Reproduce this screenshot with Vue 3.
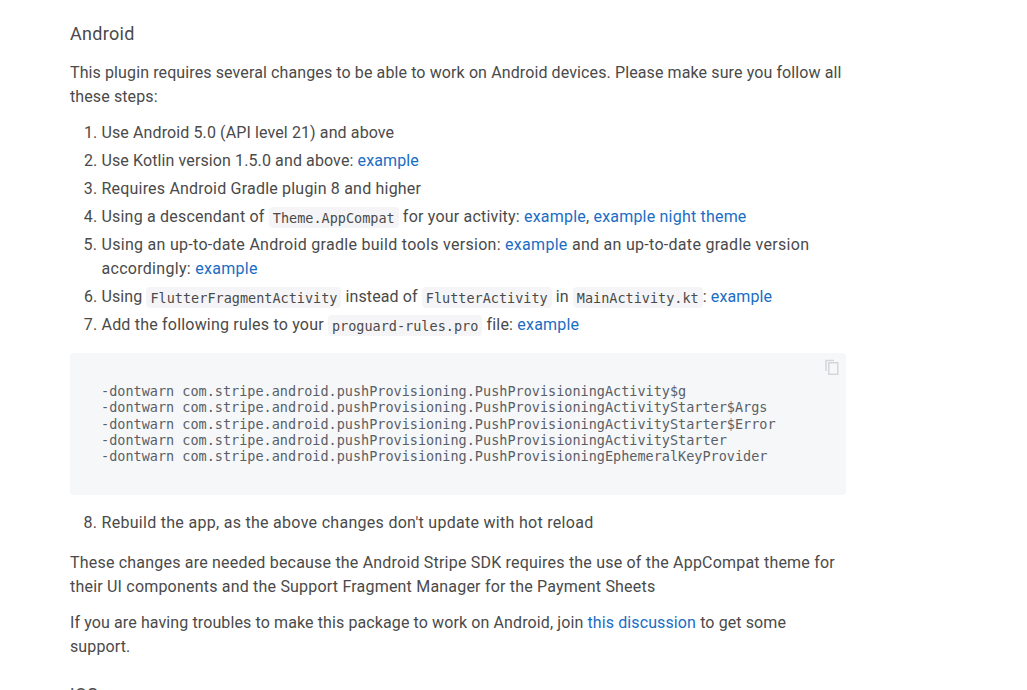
<script setup>
const lines = [
  '-dontwarn com.stripe.android.pushProvisioning.PushProvisioningActivity$g',
  '-dontwarn com.stripe.android.pushProvisioning.PushProvisioningActivityStarter$Args',
  '-dontwarn com.stripe.android.pushProvisioning.PushProvisioningActivityStarter$Error',
  '-dontwarn com.stripe.android.pushProvisioning.PushProvisioningActivityStarter',
  '-dontwarn com.stripe.android.pushProvisioning.PushProvisioningEphemeralKeyProvider',
]
</script>

<template>
  <main class="page">
    <article class="doc">
      <h4>Android</h4>
      <p class="tight">This plugin requires several changes to be able to work on Android devices. Please make sure you follow all these steps:</p>
      <ol>
        <li class="tight">Use Android 5.0 (API level 21) and above</li>
        <li class="tight">Use Kotlin version 1.5.0 and above: <a>example</a></li>
        <li>Requires Android Gradle plugin 8 and higher</li>
        <li>Using a descendant of <code>Theme.AppCompat</code> for your activity: <a>example</a>, <a>example night theme</a></li>
        <li class="wide">Using an up-to-date Android gradle build tools version: <a>example</a> and an up-to-date gradle version accordingly: <a>example</a></li>
        <li class="tight">Using <code>FlutterFragmentActivity</code> instead of <code>FlutterActivity</code> in <code>MainActivity.kt</code>: <a>example</a></li>
        <li>Add the following rules to your <code>proguard-rules.pro</code> file: <a>example</a></li>
      </ol>
      <div class="block">
        <svg class="copy" viewBox="0 0 16 16" width="16" height="16" fill="none" stroke="#d4d6d9" stroke-width="1.5">
          <path d="M2 12V1.5H10" />
          <rect x="4.75" y="3.75" width="9" height="11.5" />
        </svg>
        <pre>{{ lines.join('\n') }}</pre>
      </div>
      <ol start="8">
        <li class="wide">Rebuild the app, as the above changes don't update with hot reload</li>
      </ol>
      <p>These changes are needed because the Android Stripe SDK requires the use of the AppCompat theme for their UI components and the Support Fragment Manager for the Payment Sheets</p>
      <p class="tight">If you are having troubles to make this package to work on Android, join <a>this discussion</a> to get some support.</p>
      <h4 class="next">iOS</h4>
    </article>
  </main>
</template>

<style>
html, body { margin: 0; background: #fff; }
</style>

<style scoped>
.page {
  height: 690px;
  overflow: hidden;
  padding: 22px 0 0 70px;
  box-sizing: border-box;
  font-family: Roboto, "Liberation Sans", sans-serif;
  font-size: 16px;
  line-height: 24px;
  letter-spacing: 0.2px;
  color: #4a4a4a;
}
.doc { width: 776px; }
h4 {
  margin: 0 0 15px;
  font-size: 18px;
  line-height: 24px;
  font-weight: 400;
  letter-spacing: 0.3px;
}
.next { margin-top: 24px; }
p { margin: 0 0 12px; }
.tight { letter-spacing: 0.11px; }
.wide { letter-spacing: 0.29px; }
ol { margin: 0 0 16px; padding: 0 0 0 31.5px; }
li { margin-bottom: 4px; }
a { color: #1a6dc4; }
code, pre { font-family: "DejaVu Sans Mono", monospace; letter-spacing: 0; }
code {
  font-size: 13.5px;
  background: #f5f5f7;
  border-radius: 4px;
  padding: 2.5px 4px;
}
.block {
  position: relative;
  height: 142px;
  margin: 0 0 16px;
  background: #f6f7f9;
  border-radius: 4px;
  box-sizing: border-box;
  padding: 30px 31px;
}
.copy { position: absolute; top: 6px; right: 6px; }
pre {
  margin: 0;
  font-size: 13.5px;
  line-height: 16.3px;
  color: #5a5f66;
}
</style>
